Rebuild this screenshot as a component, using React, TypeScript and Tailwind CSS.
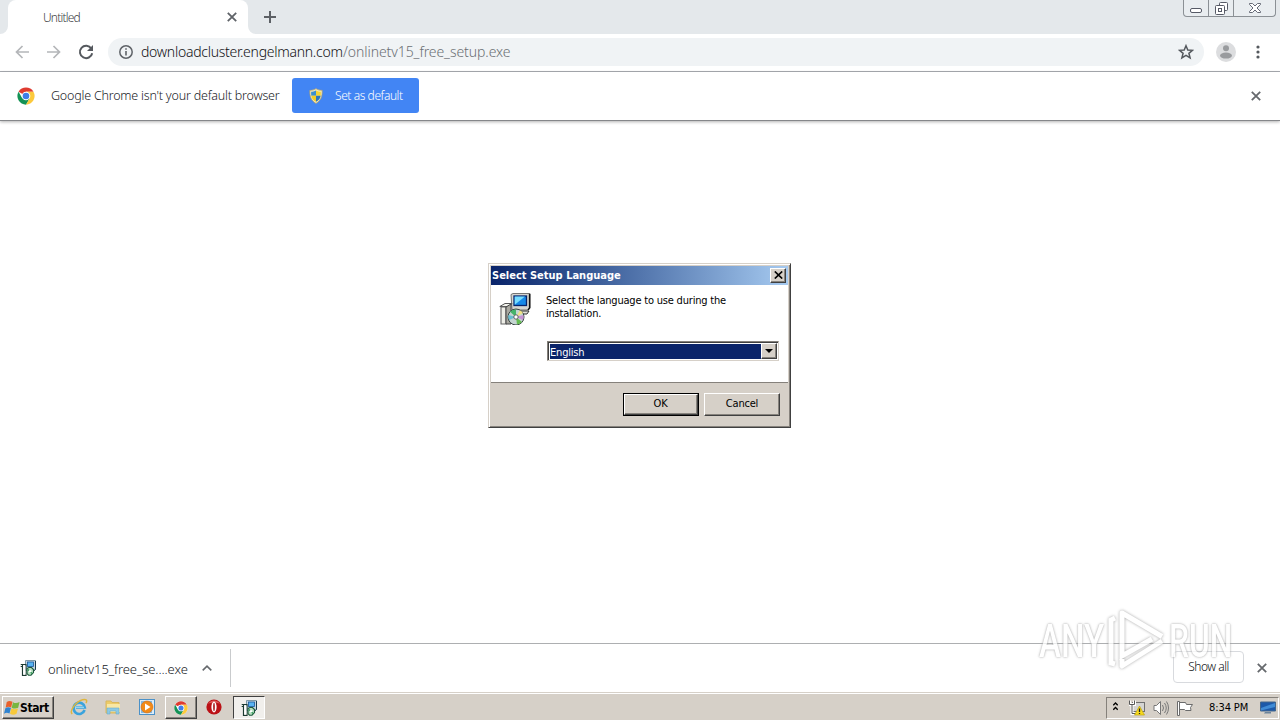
import React from "react";

const TAHOMA = "font-['DejaVu_Sans_Condensed','DejaVu_Sans',sans-serif] [font-stretch:condensed]";
const LIGHT = "font-['Noto_Sans','Open_Sans',sans-serif] font-light";

function Cross({ className = "" }: { className?: string }) {
  return (
    <svg width="10" height="10" viewBox="0 0 10 10" className={className} stroke="currentColor" strokeWidth="1.8" fill="none">
      <path d="M0.8 0.8L9.2 9.2M9.2 0.8L0.8 9.2" />
    </svg>
  );
}

function ChromeLogo({ size }: { size: number }) {
  return (
    <svg width={size} height={size} viewBox="0 0 48 48" className="shrink-0">
      <circle cx="24" cy="24" r="23" fill="#fff" />
      <path d="M24 24L4.1 12.5A23 23 0 0 1 43.9 12.5H24Z" fill="#df3b30" />
      <path d="M4.1 12.5A23 23 0 0 0 24 47L34 29.8L24 24L14 29.8Z" fill="#149255" />
      <path d="M43.9 12.5A23 23 0 0 1 24 47L34 29.8L24 12.5Z" fill="#fcc93c" />
      <circle cx="24" cy="24" r="11.5" fill="#fff" />
      <circle cx="24" cy="24" r="8.8" fill="#3f7ee8" />
    </svg>
  );
}

function SetupIcon({ size }: { size: number }) {
  return (
    <svg width={size} height={size} viewBox="0 0 32 32" className="shrink-0">
      <path d="M12 1.5L14 0.5H31V15L29 17H13Z" fill="#d6d6d1" stroke="#555" strokeWidth="0.8" />
      <path d="M30.6 1V15L29 17" fill="none" stroke="#111" strokeWidth="1.5" />
      <rect x="15" y="3" width="12.5" height="9.5" fill="#1688e8" stroke="#06246c" strokeWidth="1.3" />
      <path d="M15.7 11.8L26 3.6H15.7Z" fill="#76dcff" />
      <path d="M14 18H30L28 21H14Z" fill="#deded8" stroke="#333" strokeWidth="1" />
      <path d="M0.8 13.5L6 10.5H13L10 13.5Z" fill="#f4f4ee" stroke="#555" strokeWidth="1" />
      <path d="M2 14H7V31H2Z" fill="#eeeee7" stroke="#666" strokeWidth="1.1" />
      <path d="M7 14L12 11V31H7Z" fill="#aaa9a1" stroke="#444" strokeWidth="1" />
      <circle cx="17" cy="24" r="8" fill="#c5d5d2" stroke="#384442" strokeWidth="1" />
      <path d="M17 24L11 18.8A8 8 0 0 1 17 16.4Z" fill="#45b46a" />
      <path d="M17 24L23 29A8 8 0 0 1 18 31.5Z" fill="#65bd52" />
      <path d="M17 24L24.4 22A8 8 0 0 1 24 27Z" fill="#c594d4" />
      <path d="M17 24L9.4 22A8 8 0 0 0 10 27Z" fill="#69bed1" />
      <path d="M17 24L21 17.2A8 8 0 0 1 24 20Z" fill="#f0e285" />
      <circle cx="17" cy="24" r="2.2" fill="#fff" stroke="#555" strokeWidth="0.9" />
    </svg>
  );
}

function SmallSetupIcon() {
  return (
    <svg width="16" height="16" viewBox="0 0 16 16" className="shrink-0">
      <path d="M5.5 0.5H15.5V9L14.5 10.5H5.5Z" fill="#c3d5e0" stroke="#7f98a5" />
      <path d="M15.5 1V9.5L13.5 11" stroke="#183848" fill="none" />
      <rect x="7.5" y="2" width="6" height="4.5" fill="#57b3f2" stroke="#1a5599" strokeWidth="0.8" />
      <path d="M0.7 4.5H6.5M2.5 4.5V15.3H6V4.5M0.7 6.5H3" fill="none" stroke="#1d3a31" strokeWidth="1.2" />
      <path d="M3.3 5.5H5.5V14.6H3.3Z" fill="#fff" />
      <path d="M7 8.5L9 7.5H11.5L13.5 9.5V12.5L11 15.2H8.5L7 13.5Z" fill="#b9dfc1" stroke="#1d5a3c" strokeWidth="1.1" />
      <path d="M8 9.5L12 13.5" stroke="#2f9955" strokeWidth="1.2" />
      <circle cx="10" cy="11.3" r="1.2" fill="#fff" />
    </svg>
  );
}

function Shield() {
  return (
    <svg width="14" height="16" viewBox="0 0 14 16">
      <path d="M7 0.6C5.2 1.9 3 2.4 0.8 2.3C0.6 8.5 2 12.6 7 15.4C12 12.6 13.4 8.5 13.2 2.3C11 2.4 8.8 1.9 7 0.6Z" fill="#efe6bd" stroke="#ad9e65" strokeWidth="0.7" />
      <path d="M7 2.4V7.7H2.3C2.1 6 2.1 5 2.2 3.7C4 3.7 5.5 3.3 7 2.4Z" fill="#3b8fd0" />
      <path d="M7 2.4V7.7H11.7C11.9 6 11.9 5 11.8 3.7C10 3.7 8.5 3.3 7 2.4Z" fill="#f6d435" />
      <path d="M7 7.7V13.8C4 12 2.8 10.4 2.3 7.7Z" fill="#f4cd24" />
      <path d="M7 7.7V13.8C10 12 11.2 10.4 11.7 7.7Z" fill="#2f76ba" />
    </svg>
  );
}

function TabStrip() {
  return (
    <div className="flex h-[34px] shrink-0 items-start justify-between bg-[#e4e8eb]">
      <div className="flex h-[34px]">
        <svg width="8" height="34" viewBox="0 0 8 34"><path d="M8 26A8 8 0 0 1 0 34H8Z" fill="#fff" /></svg>
        <div className="flex h-[34px] w-60 items-center justify-between rounded-t-lg bg-white pr-[11px] pl-[35px]">
          <span className={`${LIGHT} pt-px text-[12px] leading-4 tracking-[-0.8px] text-[#3c4043]`}>Untitled</span>
          <Cross className="text-[#5f6368]" />
        </div>
        <svg width="8" height="34" viewBox="0 0 8 34"><path d="M0 26A8 8 0 0 0 8 34H0Z" fill="#fff" /></svg>
        <svg width="12" height="12" viewBox="0 0 12 12" className="mt-[11px] ml-2" stroke="#5c6065" strokeWidth="2"><path d="M6 0V12M0 6H12" /></svg>
      </div>
      <div className="mr-1 flex h-[17px] w-[93px] rounded-b-[4px] border border-t-0 border-[#8b9095] bg-[#e9edf0]">
        <div className="flex w-[25px] justify-center border-r border-[#8b9095] pt-2">
          <svg width="12" height="5" viewBox="0 0 12 5"><rect x="0.5" y="0.5" width="11" height="4" rx="1.5" fill="#fff" stroke="#565a66" /></svg>
        </div>
        <div className="flex w-[25px] justify-center border-r border-[#8b9095] pt-[2px]">
          <svg width="13" height="13" viewBox="0 0 13 13" fill="#fff" stroke="#565a66">
            <rect x="4.5" y="0.5" width="8" height="8" rx="1" />
            <rect x="0.5" y="3.5" width="9" height="9" rx="1" />
            <rect x="3.5" y="6.5" width="3" height="3" />
          </svg>
        </div>
        <div className="flex flex-1 justify-center pt-[3px]">
          <svg width="12" height="10" viewBox="0 0 12 10"><path d="M0.5 0.5H3.5L6 3L8.5 0.5H11.5V1.5L8 5L11.5 8.5V9.5H8.5L6 7L3.5 9.5H0.5V8.5L4 5L0.5 1.5Z" fill="#fff" stroke="#565a66" strokeWidth="0.9" /></svg>
        </div>
      </div>
    </div>
  );
}

function Toolbar() {
  return (
    <div className="flex h-[38px] shrink-0 items-center border-b border-[#aaadb3] bg-white pb-px pl-[15px]">
      <svg width="14" height="14" viewBox="0 0 14 14" fill="none" stroke="#b4b6b9" strokeWidth="1.7"><path d="M14 7H1.5M7.5 1L1.5 7L7.5 13" /></svg>
      <svg width="14" height="14" viewBox="0 0 14 14" fill="none" stroke="#b4b6b9" strokeWidth="1.7" className="ml-[18px]"><path d="M0 7H12.5M6.5 1L12.5 7L6.5 13" /></svg>
      <svg width="16" height="16" viewBox="0 0 16 16" className="ml-[17px]"><path d="M13.3 4.5A6.2 6.2 0 1 0 14.2 9.2" fill="none" stroke="#55595e" strokeWidth="2" /><path d="M15 1V7H9Z" fill="#55595e" /></svg>
      <div className="ml-[14px] flex h-7 w-[1096px] items-center rounded-full bg-[#f0f3f5] pr-[10px] pl-[11px]">
        <svg width="14" height="14" viewBox="0 0 14 14"><circle cx="7" cy="7" r="6.2" fill="none" stroke="#5f6368" strokeWidth="1.5" /><path d="M7 6V10.5M7 3.2V4.8" stroke="#5f6368" strokeWidth="1.6" /></svg>
        <div className={`${LIGHT} ml-2 flex flex-1 text-[14px] leading-5 whitespace-nowrap`}>
          <span className="w-[202px] tracking-[-0.27px] text-[#101114]">downloadcluster.engelmann.com</span>
          <span className="tracking-[-0.07px] text-[#6b6f74]">/onlinetv15_free_setup.exe</span>
        </div>
        <svg width="16" height="16" viewBox="0 0 16 16"><path d="M8 1.7L9.8 6L14.5 6.3L10.9 9.3L12.1 13.9L8 11.4L3.9 13.9L5.1 9.3L1.5 6.3L6.2 6Z" fill="none" stroke="#55595e" strokeWidth="1.5" /></svg>
      </div>
      <svg width="20" height="20" viewBox="0 0 20 20" className="ml-3"><circle cx="10" cy="10" r="10" fill="#dcdddf" /><circle cx="10" cy="6.2" r="3" fill="#999b9e" /><ellipse cx="10" cy="13.6" rx="6" ry="3" fill="#999b9e" /></svg>
      <svg width="4" height="14" viewBox="0 0 4 14" className="ml-5" fill="#55595e"><circle cx="2" cy="2" r="1.6" /><circle cx="2" cy="7" r="1.6" /><circle cx="2" cy="12" r="1.6" /></svg>
    </div>
  );
}

function InfoBar() {
  return (
    <div className="flex h-[49px] shrink-0 items-center border-b border-[#85878a] bg-white pr-[19px] pl-[17px] shadow-[0_1px_3px_rgba(0,0,0,0.3)]">
      <ChromeLogo size={18} />
      <span className={`${LIGHT} ml-4 w-[241px] text-[12.5px] leading-4 tracking-[-0.21px] whitespace-nowrap text-[#202226]`}>Google Chrome isn't your default browser</span>
      <button className={`${LIGHT} mb-px flex h-[35px] w-[127px] items-center rounded-[3px] bg-[#4285f4] pl-[17px] text-[12px] text-white`}>
        <Shield />
        <span className="ml-3 tracking-[-0.42px] whitespace-nowrap">Set as default</span>
      </button>
      <Cross className="ml-auto text-[#66696d]" />
    </div>
  );
}

const raised = "border border-t-white border-l-white border-r-[#404040] border-b-[#404040] bg-[#d6d0c8] shadow-[inset_-1px_-1px_0_#87837d]";

function SetupDialog() {
  return (
    <div className={`${TAHOMA} absolute top-[263px] left-[488px] flex h-[165px] w-[303px] flex-col border border-t-[#d6d0c8] border-r-[#404040] border-b-[#404040] border-l-[#d6d0c8] bg-[#d6d0c8] p-[2px] text-[11px] tracking-[-0.2px] text-black shadow-[inset_1px_1px_0_#fff,inset_-1px_-1px_0_#87837d]`}>
      <div className="flex h-[19px] shrink-0 items-center justify-between bg-linear-to-r from-[#0a246a] to-[#a6caf0] pr-[2px] pl-[1px]">
        <span className="text-[11px] leading-4 font-bold tracking-normal whitespace-nowrap text-white">Select Setup Language</span>
        <div className={`${raised} mb-px flex h-[15px] w-4 items-center justify-center`}>
          <svg width="9" height="8" viewBox="0 0 9 8"><path d="M0.8 0.5L8.2 7.5M8.2 0.5L0.8 7.5" stroke="#000" strokeWidth="1.7" /></svg>
        </div>
      </div>
      <div className="flex h-[98px] shrink-0 border-b border-[#85817b] bg-white pt-2 pl-2">
        <SetupIcon size={32} />
        <div className="ml-[15px] flex flex-col">
          <p className="mt-px h-[26px] leading-[13px] whitespace-nowrap">Select the language to use during the<br />installation.</p>
          <div className="mt-[21px] ml-[1px] flex h-5 w-[232px] border border-t-[#85817b] border-r-[#d6d0c8] border-b-[#d6d0c8] border-l-[#85817b] p-px shadow-[inset_1px_1px_0_#404040]">
            <div className="mt-px ml-px flex-1 bg-[#0a246a] pt-px leading-[15px] text-white">English</div>
            <div className={`${raised} flex w-4 items-center justify-center`}>
              <svg width="8" height="4" viewBox="0 0 8 4"><path d="M0 0H8L4 4Z" /></svg>
            </div>
          </div>
        </div>
      </div>
      <div className="flex flex-1 justify-end gap-[5px] pt-[10px] pr-2">
        <button className="h-[23px] w-[76px] border border-black"><span className={`${raised} flex h-full items-center justify-center pr-px`}>OK</span></button>
        <button className={`${raised} h-[23px] w-[76px]`}>Cancel</button>
      </div>
    </div>
  );
}

function Watermark() {
  const word = "w-[66px] origin-left font-['Roboto',sans-serif] text-[46px] leading-[60px] font-medium text-white [text-shadow:0_0_3px_#999,0_0_2px_#bbb]";
  return (
    <div className="absolute top-[610px] left-[1039px] flex h-[62px] w-[200px] items-center opacity-75">
      <div className={`${word} scale-x-[0.72]`}>ANY</div>
      <svg width="64" height="64" viewBox="0 0 64 64" className="shrink-0 overflow-visible drop-shadow-[0_0_1.5px_#888]" fill="none" stroke="#fff" strokeWidth="5">
        <path d="M10 9L6 11V54L10 55" />
        <path d="M17 17V4L57 27.5" strokeLinejoin="round" />
        <path d="M17 17V47L47 30" />
        <path d="M57 32L17 57V50" strokeLinejoin="round" />
      </svg>
      <div className={`${word} scale-x-[0.69]`}>RUN</div>
    </div>
  );
}

function DownloadShelf() {
  return (
    <div className={`${LIGHT} flex h-[49px] shrink-0 items-center border-t border-[#adafb1] bg-white pr-[13px] pl-5`}>
      <SmallSetupIcon />
      <span className="ml-3 w-[154px] pt-px text-[13px] leading-4 tracking-[-0.1px] whitespace-nowrap text-[#202226]">onlinetv15_free_se....exe</span>
      <svg width="10" height="6" viewBox="0 0 10 6" fill="none" stroke="#66696d" strokeWidth="1.6"><path d="M0.7 5.4L5 1.2L9.3 5.4" /></svg>
      <div className="ml-[18px] h-[38px] w-px bg-[#c9cbcd]" />
      <button className="mr-[13px] mb-[2px] ml-auto h-8 w-[71px] rounded-[4px] border border-[#d8dade] text-[12px] tracking-[-0.5px] text-[#101114]">Show all</button>
      <Cross className="text-[#66696d]" />
    </div>
  );
}

function Taskbar() {
  return (
    <div className="flex h-7 shrink-0 items-center border-t border-[#d6d0c8] bg-[#d6d0c8] shadow-[inset_0_1px_0_#fff]">
      <button className={`${TAHOMA} ${raised} mt-[2px] ml-[2px] flex h-[23px] w-[52px] items-center pl-px text-[12px] font-bold tracking-[-0.4px] text-black`}>
        <svg width="16" height="17" viewBox="0 0 17.5 18" className="shrink-0">
          <path d="M3 3C5 1.5 7 1.7 9.3 2.8L7.8 8.9C5.5 7.9 3.8 7.9 1.8 9.2Z" fill="#e8602b" />
          <path d="M9.9 3.2C12 4.5 14 4.5 17 3L15.5 9.3C13 10.5 10.8 10.4 8.4 9.2Z" fill="#78b640" />
          <path d="M1.5 9.8C3.5 8.5 5.4 8.5 7.6 9.6L6 15.5C3.8 14.4 2 14.5 0 15.7Z" fill="#2f83d0" />
          <path d="M8.1 9.9C10.5 11.1 12.7 11.2 15.3 10L13.7 15.9C11.3 17.2 9 17.1 6.6 15.9Z" fill="#f8c93a" />
        </svg>
        Start
      </button>
      <svg width="18" height="18" viewBox="0 0 18 18" className="mt-px ml-4">
        <path d="M14.6 12A5.6 5.6 0 1 1 14.8 9.5H6" fill="none" stroke="#3aa3dd" strokeWidth="2.6" />
        <path d="M5 9.3H14" stroke="#9bdcf8" strokeWidth="1.2" />
        <path d="M2.2 16C-1 13 6 3.5 12.5 1.8C16.5 0.8 17.5 2.5 16 5" fill="none" stroke="#dfb63d" strokeWidth="1.5" />
      </svg>
      <svg width="16" height="16" viewBox="0 0 16 16" className="mt-px ml-[17px]">
        <path d="M1 2H6L7 3.5H14V14H1Z" fill="#edcc68" stroke="#d9b75e" />
        <path d="M2 5H15V13H2Z" fill="#f8e7a4" />
        <path d="M2 15V9H14V15H11V12H5V15Z" fill="#8cc9e4" stroke="#6aacce" strokeWidth="0.6" />
      </svg>
      <svg width="16" height="16" viewBox="0 0 16 16" className="mt-px ml-[18px]">
        <rect x="0.5" y="0.5" width="15" height="15" fill="#dcecf8" stroke="#4b91c8" />
        <rect x="2" y="2" width="11" height="12" fill="#84b9e2" />
        <circle cx="8" cy="8" r="6" fill="#f28a18" stroke="#d3670b" strokeWidth="0.5" />
        <path d="M6 4.5L11.5 8L6 11.5Z" fill="#fff" />
      </svg>
      <div className={`${raised} mt-[2px] ml-[10px] flex h-[23px] w-8 items-center justify-center pr-px`}><ChromeLogo size={14} /></div>
      <svg width="16" height="16" viewBox="0 0 16 16" className="mt-px ml-[9px]">
        <circle cx="8" cy="8" r="7.6" fill="#bb1116" />
        <path d="M2 5A7 7 0 0 1 14 5C11 3 5 3 2 5Z" fill="#de5958" />
        <ellipse cx="8" cy="8" rx="2.6" ry="5.4" fill="#fff" />
        <ellipse cx="8" cy="8" rx="0.9" ry="4.2" fill="#ad2428" />
      </svg>
      <div className="mt-[2px] ml-[11px] flex h-[23px] w-8 items-center justify-center border border-t-[#404040] border-r-white border-b-white border-l-[#404040] bg-[#f1efec]"><SmallSetupIcon /></div>
      <div className="mt-[2px] mr-px ml-auto flex h-[22px] w-[173px] items-center border border-t-[#85817b] border-r-white border-b-white border-l-[#85817b] pl-[6px]">
        <svg width="5" height="9" viewBox="0 0 5 9" className="mb-[2px]" fill="none" stroke="#000" strokeWidth="1.3"><path d="M0.3 3.2L2.5 1L4.7 3.2M0.3 7.7L2.5 5.5L4.7 7.7" /></svg>
        <svg width="17" height="16" viewBox="0 0 17 16" className="ml-[11px]">
          <rect x="3.5" y="2.5" width="12" height="9" fill="#d5d5d3" stroke="#707070" />
          <path d="M0.5 0.5V4.5H5.5V0.5M3 4.5V13.5H7" fill="none" stroke="#fff" strokeWidth="3" />
          <path d="M0.5 0.5V4.5H5.5V0.5M3 4.5V13.5H7" fill="none" stroke="#585858" />
          <path d="M10.5 6L15.5 15H5.5Z" fill="#f7d91b" stroke="#bba315" strokeWidth="0.7" />
          <path d="M10.5 8.5V12M10.5 13V14" stroke="#222" strokeWidth="1.3" />
        </svg>
        <svg width="16" height="16" viewBox="0 0 16 16" className="ml-[7px]" fill="none" stroke="#777">
          <path d="M1 5.5H3.5L7.5 1.5V14.5L3.5 10.5H1Z" fill="#fff" />
          <path d="M9.5 5Q11.5 8 9.5 11M11.5 3Q15 8 11.5 13M13.5 1.5Q17.5 8 13.5 14.5" />
        </svg>
        <svg width="17" height="16" viewBox="0 0 17 16" className="ml-2" fill="#fff" stroke="#6b6b6b">
          <path d="M2.5 2.5H8.5L9.5 4.5H15.5L13.5 7.5L14 10.5H8.5L7.5 9.5H2.5Z" />
          <path d="M0.5 1.5H2.5V15.5H0.5Z" />
        </svg>
        <span className={`${TAHOMA} ml-[15px] w-[51px] pt-px text-[11px] tracking-[-0.1px] whitespace-nowrap text-black`}>8:34 PM</span>
        <svg width="16" height="14" viewBox="0 0 16 14" className="mt-px">
          <path d="M0.5 1H15.5V10H0.5Z" fill="#1c59a9" stroke="#45678b" />
          <path d="M1 7L15 2V6L1 9.5Z" fill="#408bd5" />
          <path d="M5 11H11V12.5H4Z" fill="#6c849b" />
        </svg>
      </div>
    </div>
  );
}

export default function App() {
  return (
    <div className="relative flex h-[720px] w-[1280px] flex-col overflow-hidden bg-white">
      <TabStrip />
      <Toolbar />
      <InfoBar />
      <main className="flex-1" />
      <DownloadShelf />
      <Taskbar />
      <SetupDialog />
      <Watermark />
    </div>
  );
}
